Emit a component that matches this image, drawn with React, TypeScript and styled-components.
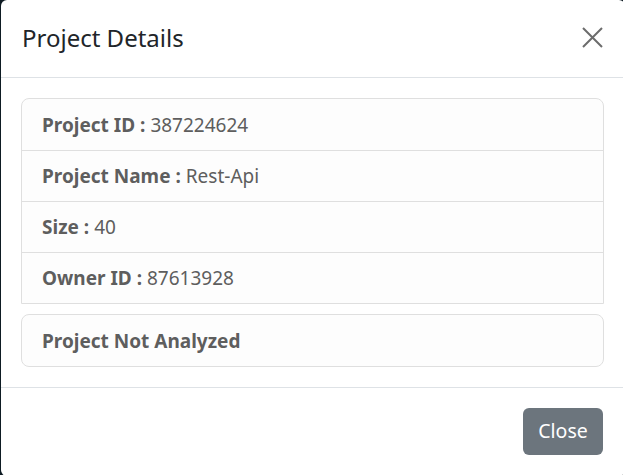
import React from "react";
import styled, { createGlobalStyle } from "styled-components";

const GlobalStyle = createGlobalStyle`
  html, body { margin: 0; padding: 0; }
  body {
    background: #0e1b23;
    font-family: "Noto Sans", "Open Sans", sans-serif;
    overflow: hidden;
  }
`;

const Backdrop = styled.div`
  width: 623px;
  height: 475px;
  display: flex;
  padding-left: 1px;
  box-sizing: border-box;
`;

const Modal = styled.div`
  width: 624px;
  height: 476px;
  flex-shrink: 0;
  background: #ffffff;
  border-radius: 6px;
  display: flex;
  flex-direction: column;
  overflow: hidden;
`;

const Header = styled.div`
  height: 78px;
  box-sizing: border-box;
  display: flex;
  align-items: center;
  justify-content: space-between;
  padding: 0 22px 0 21px;
  border-bottom: 1px solid #dee2e6;
  flex-shrink: 0;
`;

const Title = styled.h5`
  margin: 0;
  font-size: 24px;
  font-weight: 400;
  color: #212529;
  line-height: 1;
  padding-bottom: 1px;
`;

const CloseX = styled.button`
  width: 22px;
  height: 22px;
  padding: 0;
  border: 0;
  background: transparent;
  display: flex;
  align-items: center;
  justify-content: center;
  margin-top: -3px;
  cursor: pointer;
`;

const Body = styled.div`
  padding: 20px 21px 20px 20px;
  display: flex;
  flex-direction: column;
  gap: 10px;
  border-bottom: 1px solid #dee2e6;
`;

const Card = styled.div<{ $rounded?: boolean }>`
  border: 1px solid #dfdfdf;
  border-radius: ${(p) => (p.$rounded ? "8px" : "8px 8px 0 0")};
  background: #fdfdfd;
  display: flex;
  flex-direction: column;
`;

const Row = styled.div`
  height: 50px;
  display: flex;
  align-items: center;
  padding: 0 20px;
  font-size: 19px;
  color: #5e5e5e;
  &:first-child {
    height: 51px;
  }
  & + & {
    border-top: 1px solid #dfdfdf;
  }
`;

const Label = styled.span`
  font-weight: 700;
  margin-right: 5px;
`;

const Footer = styled.div`
  flex: 1;
  display: flex;
  justify-content: flex-end;
  align-items: flex-start;
  padding: 20px 22px 0 0;
`;

const Button = styled.button`
  width: 80px;
  height: 47px;
  border: 0;
  border-radius: 6px;
  background: #6c757d;
  color: #ffffff;
  font-family: inherit;
  font-size: 19.5px;
  padding: 0 0 2px 0;
  cursor: pointer;
`;

const rows = [
  { label: "Project ID :", value: "387224624" },
  { label: "Project Name :", value: "Rest-Api" },
  { label: "Size :", value: "40" },
  { label: "Owner ID :", value: "87613928" },
];

export default function App() {
  return (
    <>
      <GlobalStyle />
      <Backdrop>
        <Modal>
          <Header>
            <Title>Project Details</Title>
            <CloseX aria-label="Close">
              <svg width="21" height="21" viewBox="0 0 21 21">
                <path d="M1 1 L20 20 M20 1 L1 20" stroke="#6c6c6c" strokeWidth="2" fill="none" />
              </svg>
            </CloseX>
          </Header>
          <Body>
            <Card>
              {rows.map((r) => (
                <Row key={r.label}>
                  <Label>{r.label}</Label>
                  {r.value}
                </Row>
              ))}
            </Card>
            <Card $rounded>
              <Row>
                <Label>Project Not Analyzed</Label>
              </Row>
            </Card>
          </Body>
          <Footer>
            <Button>Close</Button>
          </Footer>
        </Modal>
      </Backdrop>
    </>
  );
}
